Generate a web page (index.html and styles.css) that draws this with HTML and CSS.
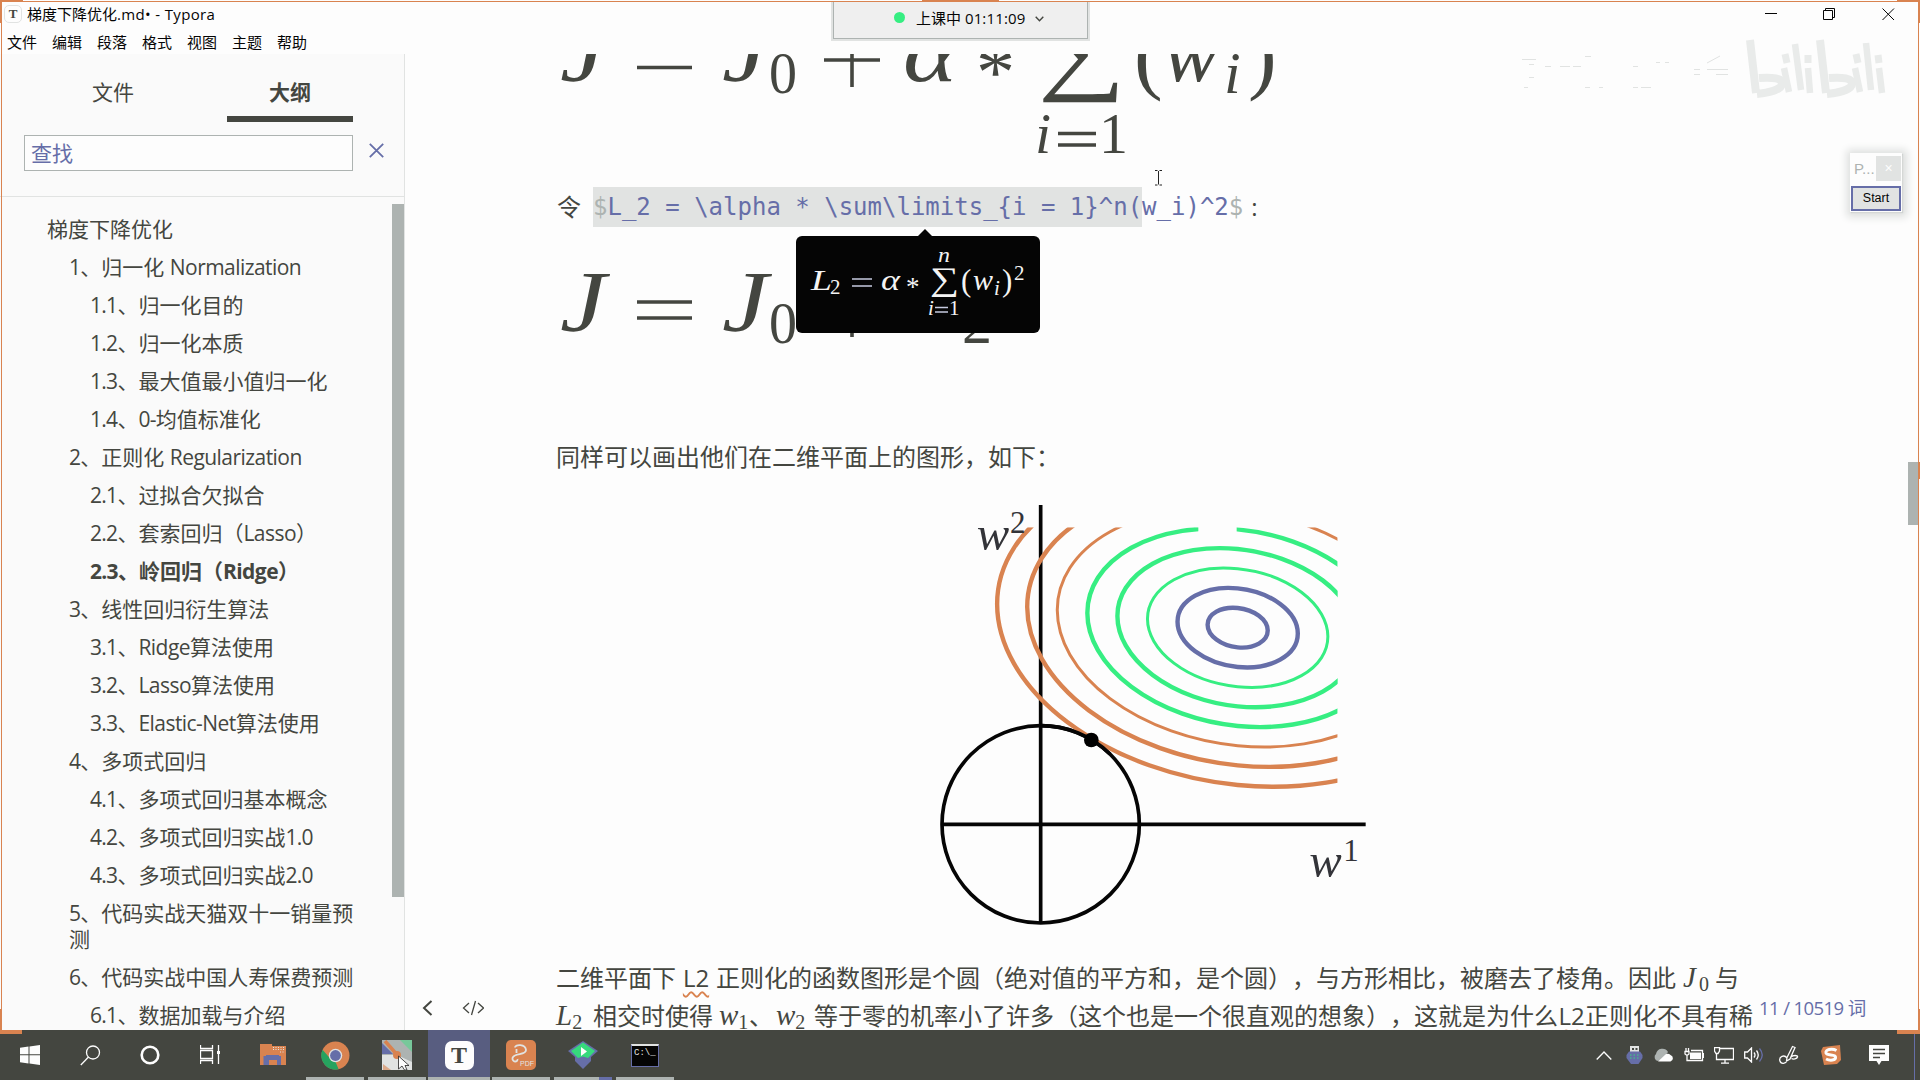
FILE: index.html
```html
<!DOCTYPE html>
<html lang="zh-CN">
<head>
<meta charset="utf-8">
<title>梯度下降优化.md• - Typora</title>
<link rel="stylesheet" href="styles.css">
</head>
<body>
<div class="window">
  <header class="titlebar">
    <span class="app-icon">T</span>
    <span class="doc-title">梯度下降优化<span class="lat">.md• - Typora</span></span>
    <svg class="win-controls" width="130" height="14" viewBox="0 0 130 14">
      <path d="M0 6.500H12M58.500 3.500H67.500V12.500H58.500ZM60.500 3.500V1.500H69.500V10.500H67.500M117.500 1.500L129 13M129 1.500L117.500 13"/>
    </svg>
  </header>
  <nav class="menubar">
    <span>文件</span><span>编辑</span><span>段落</span><span>格式</span><span>视图</span><span>主题</span><span>帮助</span>
  </nav>

  <div class="workspace">
    <aside class="sidebar">
      <div class="tabs"><span class="tab">文件</span><span class="tab active">大纲</span></div>
      <div class="search">
        <div class="search-box">查找</div>
        <svg width="15" height="15" viewBox="0 0 15 15"><path d="M.8 .8L14.200 14.200M14.200 .8L.8 14.200"/></svg>
      </div>
      <div class="outline-pane">
        <ul class="outline">
          <li class="l1">梯度下降优化</li>
          <li class="l2"><span class="n">1</span>、归一化 <span class="w">Normalization</span></li>
          <li class="l3"><span class="n">1.1</span>、归一化目的</li>
          <li class="l3"><span class="n">1.2</span>、归一化本质</li>
          <li class="l3"><span class="n">1.3</span>、最大值最小值归一化</li>
          <li class="l3"><span class="n">1.4</span>、<span class="n">0-</span>均值标准化</li>
          <li class="l2"><span class="n">2</span>、正则化 <span class="w">Regularization</span></li>
          <li class="l3"><span class="n">2.1</span>、过拟合欠拟合</li>
          <li class="l3"><span class="n">2.2</span>、套索回归（<span class="w">Lasso</span>）</li>
          <li class="l3 current"><span class="n">2.3</span>、岭回归（<span class="w">Ridge</span>）</li>
          <li class="l2"><span class="n">3</span>、线性回归衍生算法</li>
          <li class="l3"><span class="n">3.1</span>、<span class="w">Ridge</span>算法使用</li>
          <li class="l3"><span class="n">3.2</span>、<span class="w">Lasso</span>算法使用</li>
          <li class="l3"><span class="n">3.3</span>、<span class="w">Elastic-Net</span>算法使用</li>
          <li class="l2"><span class="n">4</span>、多项式回归</li>
          <li class="l3"><span class="n">4.1</span>、多项式回归基本概念</li>
          <li class="l3"><span class="n">4.2</span>、多项式回归实战<span class="n">1.0</span></li>
          <li class="l3"><span class="n">4.3</span>、多项式回归实战<span class="n">2.0</span></li>
          <li class="l2"><span class="n">5</span>、代码实战天猫双十一销量预测</li>
          <li class="l2"><span class="n">6</span>、代码实战中国人寿保费预测</li>
          <li class="l3"><span class="n">6.1</span>、数据加载与介绍</li>
        </ul>
        <div class="side-scroll"></div>
      </div>
    </aside>

    <main class="editor">
      <svg class="formula first" width="760" height="116" viewBox="557 54 760 116">
        <g class="mi">
          <text x="560" y="81" font-size="87" textLength="46" lengthAdjust="spacingAndGlyphs">J</text>
          <text x="722" y="81" font-size="87" textLength="46" lengthAdjust="spacingAndGlyphs">J</text>
          <text x="903" y="81" font-size="84" textLength="54" lengthAdjust="spacingAndGlyphs">α</text>
          <text x="1163" y="81" font-size="84">w</text>
          <text x="1224" y="93" font-size="60">i</text>
          <text x="1035" y="153" font-size="58">i</text>
        </g>
        <g class="mr">
          <text x="769" y="93" font-size="60" textLength="28" lengthAdjust="spacingAndGlyphs">0</text>
          <text x="976" y="98" font-size="78">*</text>
          <text x="1038" y="82" font-size="96" textLength="88" lengthAdjust="spacingAndGlyphs">∑</text>
          <text x="1134" y="83" font-size="86">(</text>
          <text x="1248" y="83" font-size="86">)</text>
          <text x="1099" y="153" font-size="58">1</text>
        </g>
        <path class="rule" d="M637 51.500H692M637 67.500H692M824 60H880M852 32V87M1058 133.500H1096M1058 145H1096"/>
      </svg>

      <p class="source-line">令 <span class="source"><span class="picked"><i>$</i>L_2 = \alpha * \sum\limits_{i = 1}^n(</span>w_i)^2<i>$</i>
        <span class="preview">
          <svg width="244" height="97" viewBox="796 236 244 97">
            <g class="mi">
              <text x="811" y="290" font-size="30" textLength="21" lengthAdjust="spacingAndGlyphs">L</text>
              <text x="881" y="290" font-size="29" textLength="19" lengthAdjust="spacingAndGlyphs">α</text>
              <text x="938" y="262" font-size="21" textLength="12" lengthAdjust="spacingAndGlyphs">n</text>
              <text x="973" y="290" font-size="29" textLength="20" lengthAdjust="spacingAndGlyphs">w</text>
              <text x="994" y="295" font-size="21">i</text>
              <text x="928" y="315" font-size="21">i</text>
            </g>
            <g class="mr">
              <text x="830" y="294" font-size="21">2</text>
              <text x="906" y="296" font-size="27">*</text>
              <text x="930" y="290" font-size="33" textLength="29" lengthAdjust="spacingAndGlyphs">∑</text>
              <text x="961" y="291" font-size="31">(</text>
              <text x="1002" y="291" font-size="31">)</text>
              <text x="1014" y="280" font-size="21">2</text>
              <text x="949" y="315" font-size="21">1</text>
            </g>
            <path class="rule" d="M852 279H872M852 286H872M935 307.500H948M935 312H948"/>
          </svg>
        </span></span><span class="colon">:</span></p>

      <svg class="formula second" width="760" height="104" viewBox="557 256 760 104">
        <g class="mi">
          <text x="560" y="331" font-size="87" textLength="46" lengthAdjust="spacingAndGlyphs">J</text>
          <text x="722" y="331" font-size="87" textLength="46" lengthAdjust="spacingAndGlyphs">J</text>
          <text x="905" y="331" font-size="87">L</text>
        </g>
        <g class="mr">
          <text x="769" y="343" font-size="60" textLength="28" lengthAdjust="spacingAndGlyphs">0</text>
          <text x="962" y="343" font-size="60">2</text>
        </g>
        <path class="rule" d="M637 302H692M637 318H692M824 310H880M852 282V337"/>
      </svg>

      <p class="caption-line">同样可以画出他们在二维平面上的图形，如下：</p>

      <svg class="figure" width="460" height="450" viewBox="0 0 1380 1350">
        <defs><clipPath id="plot"><path d="M0 112H835V150H950V112H1253V1350H0Z"/></clipPath></defs>
        <g class="axes">
          <path d="M362 45V1300M65 1003H1337"/>
          <circle cx="362" cy="1003" r="296"/>
        </g>
        <g clip-path="url(#plot)"><g class="contours" transform="matrix(90.2 8.840 0 59 953 413)">
          <circle class="c-blue" r="1"/><circle class="c-blue" r="2"/>
          <circle class="c-green thin" r="3"/><circle class="c-green" r="5"/>
          <circle class="c-orange thin" r="6"/><circle class="c-orange" r="7"/><circle class="c-orange" r="8"/>
        </g></g>
        <clipPath id="right-edge"><path d="M0 0H1253V1350H0Z"/></clipPath>
        <g clip-path="url(#right-edge)"><g class="contours" transform="matrix(90.2 8.840 0 59 953 413)"><circle class="c-green" r="4"/></g></g>
        <path class="arc-top" d="M362 707A296 296 0 0 1 570 792"/>
        <circle cx="514" cy="750" r="22"/>
        <g class="mi">
          <text x="170" y="180" font-size="146">w</text>
          <text x="1168" y="1162" font-size="146">w</text>
        </g>
        <g class="mr">
          <text x="270" y="128" font-size="93">2</text>
          <text x="1270" y="1112" font-size="93">1</text>
        </g>
      </svg>

      <p class="prose">二维平面下<span class="term">L2</span>正则化的函数图形是个圆（绝对值的平方和，是个圆），与方形相比，被磨去了棱角。因此<span class="math m-j"><i>J</i><sub>0</sub></span>与<br><span class="math m-l"><i>L</i><sub>2</sub></span>相交时使得<span class="math m-w"><i>w</i><sub>1</sub></span>、<span class="math m-w2"><i>w</i><sub>2</sub></span>等于零的机率小了许多（这个也是一个很直观的想象），这就是为什么<span class="term tight">L2</span>正则化不具有稀</p>

      <div class="status-left">
        <svg width="62" height="16" viewBox="0 0 62 16"><path d="M9.500 1L2 8L9.500 15" stroke-width="2"/><path d="M47 3L41.500 8L47 13M56 3L61.500 8L56 13M53.500 1L49.500 15" stroke-width="1.300"/></svg>
      </div>
      <div class="word-count">11 / 10519 词</div>
      <div class="main-scroll"></div>
    </main>
  </div>

  <footer class="taskbar">
    <div class="sys">
      <span><svg width="20" height="20" viewBox="0 0 20 20"><path fill="#fdfdfd" d="M0 2.700L8.500 1.500V9.300H0ZM9.500 1.400L20 0V9.300H9.500ZM0 10.300H8.500V18.500L0 17.300ZM9.500 10.300H20V20L9.500 18.600Z"/></svg></span>
      <span><svg width="21" height="21" viewBox="0 0 21 21"><g class="ln"><circle cx="13" cy="7.500" r="6.500"/><path d="M8.500 12L.8 20"/></g></svg></span>
      <span><svg width="20" height="20" viewBox="0 0 20 20"><circle cx="10" cy="10" r="8.300" fill="none" stroke="#fdfdfd" stroke-width="2.600"/></svg></span>
      <span><svg width="20" height="20" viewBox="0 0 20 20"><path class="ln" d="M.5 0V3.500H12.500V0M.5 5.500H12.500V13.500H.5ZM.5 19V15.500H12.500V19M18.500 0V19"/><path fill="#fdfdfd" d="M17 6h3v3h-3z"/></svg></span>
    </div>
    <div class="apps">
      <span><svg width="27" height="22" viewBox="0 0 27 22"><path fill="#d98350" d="M0 0H12V2H26V21H0Z"/><path d="M13 3.500H25M13 5.500H25M20 8H25" stroke="#e1e3e2" stroke-dasharray="1 1.500"/><path fill="#666ea8" d="M3.500 21V12H6V11H19V12H21V21H17V16H9V21Z"/></svg></span>
      <span class="open"><svg width="29" height="29" viewBox="0 0 28 28"><circle cx="14" cy="14" r="13.500" fill="#d98350"/><path fill="#26a35f" d="M1.500 8.500L9.500 17.500L14 20L17 27.200A13.500 13.500 0 0 1 1.500 8.500Z"/><circle cx="14" cy="14" r="6.500" fill="#e1e3e2"/><circle cx="14" cy="14" r="5.200" fill="#666ea8"/></svg></span>
      <span class="open"><svg width="30" height="30" viewBox="0 0 30 30"><path fill="#adb3b1" d="M0 0H30V30H0Z"/><path fill="#666ea8" d="M0 3L11 14H0Z"/><path fill="#77c89a" d="M18 0H30V12Z"/><path fill="#e1e3e2" d="M0 15L15 15L30 22V30H0Z"/><path d="M3 1L10 9L16 16" fill="none" stroke="#d98350" stroke-width="3.500"/><circle cx="15" cy="15" r="4" fill="#d98350"/><path fill="#d98350" d="M1 24L9 30H1Z" opacity=".6"/><path fill="#fdfdfd" stroke="#222" stroke-width=".8" d="M16.500 16V29L20 26L22.500 30H25L23 25.500H27Z"/></svg></span>
      <span class="open active"><b class="t-tile">T</b></span>
      <span class="open"><b class="pdf-tile"><svg width="30" height="30" viewBox="0 0 30 30"><path fill="none" stroke="#e1e3e2" stroke-width="1.800" d="M9 7.500C9 4 19.500 4 20 10C20 16 8 12 6.500 18C6 22.500 12 22.500 11.500 19M10.500 13V9"/></svg><em>PDF</em></b></span>
      <span class="open mixed"><svg width="30" height="28" viewBox="0 0 30 28"><path fill="#666ea8" d="M15 0L30 10L23 16V20L15 28L7 20V16L0 10Z"/><path fill="#36d97c" d="M15 1.500L27 10L20 17L15 15.500L10 17L3 10Z"/><path fill="#fdfdfd" d="M13 6L19 10.500L13 15Z"/></svg></span>
      <span class="open"><b class="cmd-tile">C:\_</b></span>
    </div>
    <div class="tray">
      <span><svg width="16" height="9" viewBox="0 0 16 9"><path class="ln" d="M.7 8.500L8 1L15.300 8.500"/></svg></span>
      <span><svg width="17" height="19" viewBox="0 0 17 19"><path fill="#e1e3e2" d="M4 0H13V6H4Z"/><path fill="#444640" d="M6 2h2v2H6zM9.500 2h2v2h-2z"/><path fill="#666ea8" d="M3 5.500H14L16.500 9V12L12.500 18H5L.5 12V9Z"/><path d="M4 9H13M4 12H13" stroke="#36d97c" stroke-dasharray="1.500 2"/></svg></span>
      <span><svg width="20" height="14" viewBox="0 0 20 14"><path fill="#adb3b1" d="M4 13A4 4 0 0 1 2 6A6.500 6.500 0 0 1 14 4L8 12Z"/><path fill="#fdfdfd" d="M4 13.500L12 6A4.200 4.200 0 0 1 16.500 7A3.400 3.400 0 0 1 16.500 13.500Z"/></svg></span>
      <span><svg width="20" height="14" viewBox="0 0 20 14"><path class="ln" d="M1 3.500H5V6L3 7.500L1 6ZM2 3V0M4.500 3V0M3 7.500V12.500H18.500V2.500H7M19.500 5V10"/><path fill="#fdfdfd" d="M6 4.500H17V11H6Z"/></svg></span>
      <span><svg width="20" height="17" viewBox="0 0 20 17"><path class="ln" d="M5 1.500H19.500V12.500H2.500V7M11 12.500V16M7 16.200H15M.5 .5H5.500V4L4 6.500H2L.5 4Z"/></svg></span>
      <span><svg width="20" height="16" viewBox="0 0 20 16"><path class="ln" d="M.7 5H3.500L7.500 1V15L3.500 11H.7ZM10 5.500Q12 8 10 10.500M12.500 3.500Q16 8 12.500 12.500"/><path d="M15.500 1.500Q21 8 15.500 14.500" fill="none" stroke="#666ea8" stroke-width="1.300"/></svg></span>
      <span class="w40"><svg width="20" height="20" viewBox="0 0 20 20"><path class="ln" d="M8 12.500L13.500 1.500L16 2.500L11 14L7.500 16ZM8 13C5 9 0 12 .8 15.500C2 20 7 18.500 8 15.500M12 12C14 10 19 10 18.500 12C18 14 14 14.500 12.500 13.500"/></svg></span>
      <span class="w44"><svg width="20" height="20" viewBox="0 0 20 20"><path fill="#d98350" d="M2 2L19 0L20 15L16 19L3 20L0 6Z"/><path fill="none" stroke="#fdfdfd" stroke-width="3" d="M15.500 5.500C11 3 4 4.500 5 8C6 11 14 9 14.500 12C15 15.500 9 16 5 14"/></svg></span>
      <span class="w52"><svg width="20" height="20" viewBox="0 0 20 20"><path fill="#fdfdfd" d="M0 0H20V16H12.500L10 20L7.500 16H0Z"/><path d="M4 4.500H16M4 8.500H16M4 12.500H11" stroke="#444640" stroke-width="1.300"/></svg></span>
      <span class="desktop-peek"></span>
    </div>
  </footer>
</div>

<div class="frame">
  <i class="f-tl"></i><i class="f-tc"></i><i class="f-tr"></i><i class="f-mr"></i><i class="f-bl"></i><i class="f-br"></i>
</div>

<div class="class-timer"><span class="dot"></span><span>上课中 <span class="clock">01:11:09</span></span><svg width="9" height="6" viewBox="0 0 9 6"><path d="M.7 .8L4.500 4.800L8.300 .8"/></svg></div>

<svg class="watermark" width="370" height="64" viewBox="0 0 370 64">
  <path class="ghost" d="M2 22.500H16M9 27.500H14M9 40.500H14M4 50.500H8M25 29.500H31M40 29.500H50M53 29.500H61M65 19.500H71M65 50.500H70M79 50.500H83M113 29.500H118M113 50.500H118M121 50.500H131M136 25.500H140M145 25.500H149M174 32.500H180M187 32.500H208M174 37.500H180M196 37.500H208M187 26L200 19"/>
  <g class="logo">
    <path d="M230 3L236 56M239 41C252 40 263 41 262 47C261 53 248 56 237 57" stroke-width="8"/>
    <path d="M300 3L306 56M309 41C322 40 333 41 332 47C331 53 318 56 307 57" stroke-width="8"/>
    <path d="M264 31L269 55M275 7L281 53M288 31L290 56M335 31L340 55M346 6L351 53M359 31L362 56" stroke-width="6.500"/>
    <path d="M265 17L267 26M288 18V26M336 17L338 26M358 18L359 26" stroke-width="7"/>
  </g>
</svg>

<div class="mini-tool">
  <div class="mini-head"><span>P...</span><b>×</b></div>
  <div class="mini-button">Start</div>
</div>

<svg class="ibeam" width="9" height="16" viewBox="0 0 9 16"><path d="M1 .5H3.500M5.500 .5H8M4.500 1V14.500M1 15H3.500M5.500 15H8"/></svg>
</body>
</html>
```

FILE: styles.css
```css
* { box-sizing: border-box; }
body {
  margin: 0;
  width: 1920px;
  height: 1080px;
  overflow: hidden;
  position: relative;
  background: #fdfdfd;
  color: #444640;
  font-family: "Open Sans", "Noto Sans CJK SC", sans-serif;
  text-spacing-trim: space-all;
}
svg { display: block; overflow: hidden; flex: none; }
i, em { font-style: normal; }
p { margin: 0; white-space: nowrap; }

.window { display: flex; flex-direction: column; height: 1080px; }

.titlebar {
  height: 31px;
  display: flex;
  align-items: center;
  padding: 0 25px 4px 4px;
  font-size: 15px;
  color: #050505;
}
.app-icon {
  width: 18px;
  height: 18px;
  border: 1px solid #e1e3e2;
  border-radius: 5px;
  font: bold 13px/16px "Liberation Serif", serif;
  text-align: center;
  color: #444640;
}
.doc-title { margin-left: 5px; }
.lat { letter-spacing: .35px; }
.win-controls { margin-left: auto; }
.win-controls path { fill: none; stroke: #050505; }

.menubar {
  height: 23px;
  display: flex;
  gap: 15px;
  padding-left: 7px;
  font-size: 15px;
  line-height: 22px;
  color: #050505;
}

.workspace { display: flex; height: 976px; }

.sidebar {
  width: 405px;
  display: flex;
  flex-direction: column;
  background: #fafafa;
  border-right: 1px solid #e1e3e2;
  font-size: 21px;
}
.tabs { display: flex; height: 68px; padding: 0 51px 0 50px; }
.tab { width: 126px; line-height: 77px; text-align: center; }
.tab.active {
  margin-left: 51px;
  font-weight: bold;
  border-bottom: 6px solid #444640;
}
.search {
  display: flex;
  align-items: center;
  height: 75px;
  padding: 13px 19px 26px 24px;
  border-bottom: 1px solid #e1e3e2;
  gap: 17px;
}
.search-box {
  width: 329px;
  height: 36px;
  border: 1px solid #adb3b1;
  background: #fdfdfd;
  padding-left: 6px;
  line-height: 34px;
  color: #666ea8;
}
.search svg { margin: -4px 0 0 -1px; }
.search svg path { stroke: #666ea8; stroke-width: 1.8; }
.outline-pane { display: flex; flex: 1; min-height: 0; overflow: hidden; }
.outline { flex: 1; margin: 0; padding: 13px 20px 0 47px; list-style: none; }
.outline li { padding: 6px 0; line-height: 26px; }
.outline .l2 { padding-left: 22px; }
.outline .l3 { padding-left: 43px; }
.outline .current { font-weight: bold; }
.n { letter-spacing: -.7px; }
.w { letter-spacing: -.55px; }
.side-scroll { width: 12px; height: 693px; margin-top: 7px; background: #adb3b1; }

.editor {
  position: relative;
  flex: 1;
  overflow: hidden;
  padding-left: 152px;
  font-size: 24px;
}
.mi { font-family: "Liberation Serif", serif; font-style: italic; }
.mr { font-family: "Liberation Serif", serif; }
.formula { fill: #444640; }
.rule { fill: none; stroke: #444640; stroke-width: 3.6; }

.source-line { height: 40px; margin-top: 17px; line-height: 40px; display: flex; gap: 12px; color: #444640; }
.source {
  position: relative;
  color: #666ea8;
  font-family: "DejaVu Sans Mono", monospace;
  font-size: 24px;
}
.source i { color: #adb3b1; }
.picked { display: inline-block; height: 40px; background: #e1e3e2; }
.colon { margin-left: -4px; }
.preview {
  position: absolute;
  left: 203px;
  top: 49px;
  z-index: 2;
  width: 244px;
  height: 97px;
  border-radius: 6px;
  background: #050505;
}
.preview::before {
  content: "";
  position: absolute;
  left: 121px;
  top: -7px;
  border: 8px solid transparent;
  border-top: 0;
  border-bottom-color: #050505;
}
.preview text { fill: #f4f4f4; }
.preview .rule { stroke: #c6cadf; stroke-width: 1.3; }
.second { margin-top: 29px; }
.caption-line { margin: 78px 0 0 -1px; line-height: 38px; }

.figure { margin: 14px 0 0 363px; }
.axes { fill: none; stroke: #050505; stroke-width: 11; }
.arc-top { fill: none; stroke: #050505; stroke-width: 11; }
.contours circle { fill: none; stroke-width: 4.4; vector-effect: non-scaling-stroke; }
.contours .thin { stroke-width: 3; }
.c-blue { stroke: #666ea8; }
.c-green { stroke: #36ee82; }
.c-orange { stroke: #d98350; }
.figure text { fill: #333439; }

.prose { margin: 19px 0 0 -1px; line-height: 38.4px; }
.term {
  display: inline-block;
  width: 40px;
  text-align: center;
  line-height: 30px;
  text-decoration: underline wavy #d98350 1.5px;
  text-underline-offset: 4px;
}
.term.tight { width: 27px; }
.math { display: inline-block; line-height: 20px; font-family: "Liberation Serif", serif; font-size: 29px; white-space: nowrap; }
.math i { font-style: italic; }
.math sub { font-size: 20px; vertical-align: -4px; line-height: 0; }
.m-j { width: 39px; padding-left: 7px; }
.m-j i { margin-right: 3px; }
.m-l { width: 37px; }
.m-w { width: 36px; padding-left: 6px; }
.m-w2 { width: 41px; padding-left: 3px; }

.status-left { position: absolute; left: 17px; top: 946px; }
.status-left path { fill: none; stroke: #444640; }
.word-count {
  position: absolute;
  left: 1354px;
  top: 940px;
  font-size: 18.500px;
  line-height: 28px;
  letter-spacing: -.6px;
  color: #666ea8;
  white-space: nowrap;
}
.main-scroll { position: absolute; right: 2px; top: 408px; width: 10px; height: 63px; background: #adb3b1; }

.taskbar { display: flex; height: 50px; background: #444640; }
.taskbar span { display: flex; align-items: center; justify-content: center; height: 50px; }
.sys { display: flex; width: 242px; }
.sys span { width: 60px; }
.ln { fill: none; stroke: #fdfdfd; stroke-width: 1.3; }
.apps { display: flex; }
.apps span { width: 62px; border-bottom: 3px solid transparent; padding-top: 3px; background-clip: padding-box; }
.apps .open { border-image: linear-gradient(90deg, transparent 5px, #adb3b1 5px 57px, transparent 57px) 3; border-width: 0 0 3px; border-style: solid; }
.apps .mixed { border-image: linear-gradient(90deg, transparent 5px, #adb3b1 5px 45px, #666ea8 45px 57px, transparent 57px) 3; }
.apps .active { background: #585d80; border-image: none; border-color: #adb3b1; }
.t-tile {
  width: 29px;
  height: 29px;
  border-radius: 7px;
  background: #fdfdfd;
  color: #444640;
  font: bold 24px/29px "Liberation Serif", serif;
  text-align: center;
}
.pdf-tile { position: relative; width: 30px; height: 30px; border-radius: 5px; background: #d98350; }
.pdf-tile em { position: absolute; right: 2px; bottom: 2px; font: 7px/8px "Liberation Sans", sans-serif; color: #e1e3e2; }
.cmd-tile {
  width: 28px;
  height: 23px;
  border: 1px solid #666ea8;
  border-top: 2px solid #e1e3e2;
  background: #050505;
  color: #e1e3e2;
  font: 9px/11px "Liberation Mono", monospace;
  padding: 2px;
}
.tray { display: flex; margin-left: auto; }
.tray span { width: 30px; }
.tray .w40 { width: 40px; }
.tray .w44 { width: 44px; }
.tray .w52 { width: 52px; }
.tray .desktop-peek { width: 6px; margin-left: 9px; border-left: 1px solid #666ea8; }

.frame { position: absolute; left: 1px; top: 1px; width: 1918px; height: 1030px; border: 1px solid #d98350; border-bottom: 0; }
.frame i { position: absolute; border: 0 solid #d98350; }
.f-tl { left: -2px; top: -2px; width: 23px; height: 23px; border-width: 2px 0 0 2px !important; }
.f-tr { right: -2px; top: -2px; width: 23px; height: 23px; border-width: 2px 2px 0 0 !important; }
.f-tc { left: 920px; top: -2px; width: 77px; height: 2px; background: #d98350; }
.f-mr { right: -2px; top: 460px; width: 2px; height: 17px; background: #d98350; }
.f-bl { left: -2px; bottom: -3px; width: 22px; height: 25px; border-width: 0 0 4px 2px !important; }
.f-br { right: -2px; bottom: -3px; width: 23px; height: 25px; border-width: 0 2px 4px 0 !important; }

.class-timer {
  position: absolute;
  left: 831px;
  top: 2px;
  width: 259px;
  height: 39px;
  display: flex;
  align-items: center;
  padding: 0 0 6px 61px;
  background: #efefef;
  border: 2px solid #e1e3e2;
  border-top: 0;
  box-shadow: inset -1px -1px #adb3b1, inset 1px 0 #adb3b1;
  font-size: 15px;
  color: #050505;
  white-space: nowrap;
}
.class-timer .dot { width: 11px; height: 11px; border-radius: 50%; background: #36ee82; margin-right: 11px; }
.class-timer svg { margin: 2px 0 0 10px; }
.class-timer path { fill: none; stroke: #444640; stroke-width: 1.4; }
.clock { letter-spacing: .15px; }

.watermark { position: absolute; left: 1520px; top: 37px; }
.watermark path { fill: none; stroke: #e9ebea; }
.watermark .ghost { stroke: #e1e3e2; }
.logo path { stroke-linejoin: round; }

.mini-tool {
  position: absolute;
  left: 1850px;
  top: 153px;
  width: 52px;
  height: 59px;
  padding: 1px;
  background: #fdfdfd;
  box-shadow: 1px 1px 8px 4px #dcdedd, 1px 1px 1px #adb3b1;
  font-family: "Liberation Sans", sans-serif;
}
.mini-head { display: flex; align-items: center; justify-content: space-between; height: 32px; padding: 1px 0 5px 3px; color: #adb3b1; font-size: 15px; }
.mini-head b { width: 25px; height: 25px; background: #e1e3e2; color: #fdfdfd; font: 14px/25px "Liberation Sans", sans-serif; text-align: center; }
.mini-button { height: 25px; border: 2px solid #666ea8; background: #e1e3e2; color: #050505; font-size: 12.500px; line-height: 21px; text-align: center; }

.ibeam { position: absolute; left: 1154px; top: 170px; }
.ibeam path { fill: none; stroke: #222; }
```
